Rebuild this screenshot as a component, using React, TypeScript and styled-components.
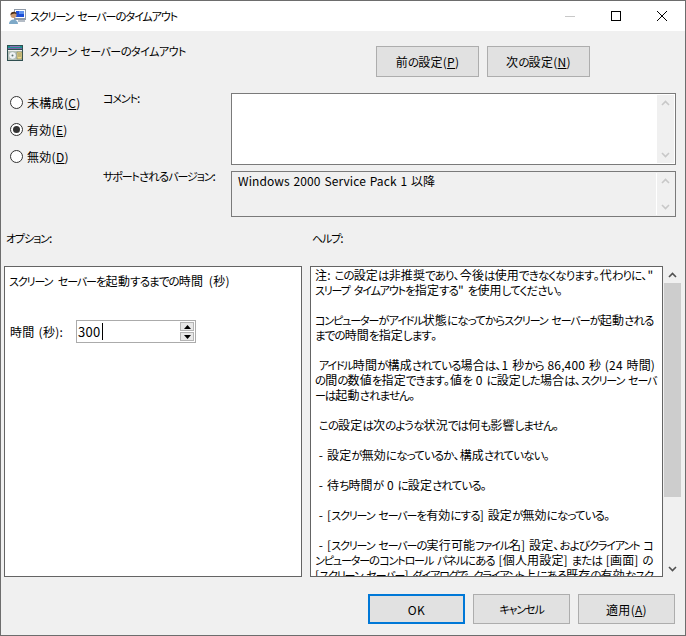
import React from 'react';
import styled, {createGlobalStyle} from 'styled-components';

const Global = createGlobalStyle`
	html, body {
		margin: 0;
		padding: 0;
		background: #f0f0f0;
	}
	body {
		font-family: "Noto Sans CJK JP", "Noto Sans", sans-serif;
		font-size: 12px;
		font-feature-settings: "palt";
		letter-spacing: 0.3px;
		word-spacing: 1px;
		color: #000;
	}
`;

const Kana = styled.span<{$katakana: boolean}>`
	font-size: ${(p) => (p.$katakana ? 11 : 11.5)}px;
	letter-spacing: ${(p) => (p.$katakana ? 'var(--katakana-track, -1.1px)' : '-0.9px')};
`;

// Meiryo UI has much narrower kana than the installed fonts, so kana runs get tightened
const Jp = ({children}: {children: string}) => {
	const runs = children.match(/[\u30a0-\u30ff]+|[\u3040-\u309f]+|[^\u3040-\u30ff]+/g) ?? [];
	return (
		<>
			{runs.map((run, i) =>
				/^[\u3040-\u30ff]/.test(run) ? (
					<Kana key={i} $katakana={/^[\u30a0-\u30ff]/.test(run)}>
						{run}
					</Kana>
				) : (
					<React.Fragment key={i}>{run}</React.Fragment>
				)
			)}
		</>
	);
};

const Window = styled.div`
	width: 686px;
	height: 636px;
	box-sizing: border-box;
	border: 1px solid #6d6d6d;
	background: #f0f0f0;
	display: flex;
	flex-direction: column;
	overflow: hidden;
`;

const TitleBar = styled.div`
	height: 30px;
	flex: none;
	background: #fff;
	display: flex;
	align-items: center;
	padding-left: 8px;
`;

const TitleText = styled.span`
	margin-left: 4px;
	flex: 1;
	line-height: 30px;
	white-space: pre;
`;

const CaptionButton = styled.div`
	width: 46px;
	height: 30px;
	display: flex;
	align-items: center;
	justify-content: center;
`;

const Header = styled.div`
	height: 62px;
	flex: none;
	display: flex;
	justify-content: space-between;
	padding: 14px 95px 0 6px;
	box-sizing: border-box;
`;

const PolicyName = styled.div`
	--katakana-track: -0.5px;
	display: flex;
	align-items: flex-start;
	gap: 7px;
	white-space: pre;
`;

const PolicyLabel = styled.span`
	line-height: 11px;
`;

const NavButtons = styled.div`
	display: flex;
	gap: 8px;
	margin-top: 1px;
`;

const Button = styled.div<{$width: number; $height: number; $primary?: boolean}>`
	width: ${(p) => p.$width}px;
	height: ${(p) => p.$height}px;
	box-sizing: border-box;
	background: #e1e1e1;
	border: ${(p) => (p.$primary ? '2px solid #0078d7' : '1px solid #adadad')};
	display: flex;
	align-items: center;
	justify-content: center;
	white-space: pre;
`;

const Settings = styled.div`
	height: 124px;
	flex: none;
	display: grid;
	grid-template-columns: 102px 128px 445px;
	grid-template-rows: 72px 46px;
	row-gap: 6px;
`;

const RadioGroup = styled.div`
	grid-row: 1 / span 2;
	display: flex;
	flex-direction: column;
	padding: 1px 0 0 9px;
	gap: 11px;
`;

const RadioRow = styled.div`
	display: flex;
	align-items: center;
	gap: 4px;
	height: 16px;
	white-space: pre;
`;

const RadioDot = styled.span<{$checked?: boolean}>`
	width: 13px;
	height: 13px;
	box-sizing: border-box;
	border-radius: 50%;
	border: 1px solid #333;
	background: #fff;
	display: flex;
	align-items: center;
	justify-content: center;
	&::after {
		content: '';
		display: ${(p) => (p.$checked ? 'block' : 'none')};
		width: 7px;
		height: 7px;
		border-radius: 50%;
		background: #333;
	}
`;

const FieldLabel = styled.div`
	line-height: 10px;
	white-space: pre;
`;

const Field = styled.div<{$readOnly?: boolean}>`
	box-sizing: border-box;
	border: 1px solid #7a7a7a;
	background: ${(p) => (p.$readOnly ? '#f0f0f0' : '#fff')};
	display: flex;
	justify-content: space-between;
	padding: ${(p) => (p.$readOnly ? '1px 1px 1px 6px' : '1px')};
	line-height: 16px;
	white-space: pre;
`;

const FieldValue = styled.span`
	letter-spacing: 0.1px;
`;

const FieldBar = styled.div<{$readOnly?: boolean}>`
	width: 17px;
	flex: none;
	background: #f0f0f0;
	border-left: ${(p) => (p.$readOnly ? '1px solid #fff' : 'none')};
	display: flex;
	flex-direction: column;
	justify-content: space-between;
	align-items: center;
	padding: 5px 0;
`;

const Captions = styled.div`
	height: 49px;
	flex: none;
	display: grid;
	grid-template-columns: 306px 1fr;
	padding: 13px 0 0 5px;
	box-sizing: border-box;
	line-height: 16px;
	white-space: pre;
`;

const Panes = styled.div`
	height: 311px;
	flex: none;
	display: flex;
	padding-left: 3px;
`;

const OptionsPane = styled.div`
	width: 298px;
	box-sizing: border-box;
	border: 1px solid #646464;
	background: #fff;
	margin-right: 8px;
	padding: 4px;
`;

const OptionTitle = styled.div`
	line-height: 20px;
	white-space: pre;
	word-spacing: 2.5px;
`;

const SpinRow = styled.div`
	display: flex;
	align-items: center;
	margin: 29px 0 0 1px;
	white-space: pre;
`;

const SpinLabel = styled.span`
	width: 66px;
`;

const SpinBox = styled.div`
	width: 120px;
	height: 23px;
	box-sizing: border-box;
	border: 1px solid #ababab;
	display: flex;
	align-items: center;
	justify-content: space-between;
	padding: 0 1px;
`;

const SpinValue = styled.span`
	display: inline-block;
	line-height: 17px;
	border-right: 1px solid #000;
	padding-right: 1px;
	font-size: 13px;
`;

const SpinButtons = styled.div`
	display: flex;
	flex-direction: column;
	gap: 1px;
`;

const SpinButton = styled.div`
	width: 14px;
	height: 9px;
	box-sizing: border-box;
	background: #e8e8e8;
	border: 1px solid #b4b4b4;
	display: flex;
	align-items: center;
	justify-content: center;
`;

const HelpPane = styled.div`
	width: 353px;
	box-sizing: border-box;
	border: 1px solid #646464;
	background: #fff;
	padding: 0 0 0 4px;
	overflow: hidden;
`;

const HelpLine = styled.div`
	height: 15px;
	line-height: 15px;
	white-space: pre;
	letter-spacing: 0.15px;
`;

const Scrollbar = styled.div`
	width: 17px;
	margin-left: 1px;
	display: flex;
	flex-direction: column;
	align-items: center;
`;

const ScrollArrow = styled.div`
	height: 17px;
	flex: none;
	display: flex;
	align-items: center;
	justify-content: center;
`;

const ScrollThumb = styled.div`
	width: 100%;
	height: 214px;
	margin-bottom: auto;
	background: #cdcdcd;
`;

const Footer = styled.div`
	flex: 1;
	display: flex;
	justify-content: flex-end;
	gap: 8px;
	padding: 17px 10px 0 0;
`;

const Chevron = ({up, color}: {up?: boolean; color: string}) => (
	<svg width="9" height="6" viewBox="0 0 9 6">
		<path d={up ? 'M1 5 L4.5 1.5 L8 5' : 'M1 1 L4.5 4.5 L8 1'} fill="none" stroke={color} strokeWidth="1.6" />
	</svg>
);

const SpinArrow = ({up}: {up?: boolean}) => (
	<svg width="7" height="4" viewBox="0 0 7 4">
		<path d={up ? 'M0 4 L3.5 0 L7 4 Z' : 'M0 0 L7 0 L3.5 4 Z'} fill="#000" />
	</svg>
);

const MonitorIcon = () => (
	<svg width="17" height="17" viewBox="0 0 17 17">
		<rect x="5" y="1" width="12" height="11" fill="#8f9aa8" />
		<rect x="6" y="2" width="10" height="8" fill="#fff" />
		<rect x="7" y="3" width="8" height="6" fill="#1d4fd8" />
		<rect x="10" y="3" width="5" height="3" fill="#5f93ee" />
		<rect x="9" y="12" width="7" height="2" fill="#b4bcc6" />
		<path d="M0 16 C0 10 9 10 9 16 Z" fill="#7ea9c8" />
		<circle cx="4.5" cy="7" r="3" fill="#c99a70" />
		<path d="M1.5 7 C1.5 2.8 7.5 2.8 7.5 6 C5.5 5 3.5 5.5 1.5 7 Z" fill="#4a2c14" />
	</svg>
);

const PolicyIcon = () => (
	<svg width="16" height="16" viewBox="0 0 16 16">
		<rect x="0" y="0" width="16" height="16" fill="#2f4f50" />
		<rect x="1" y="1" width="14" height="2" fill="#1f8f8f" />
		<rect x="3" y="1" width="10" height="1" fill="#8a6fb8" />
		<rect x="1" y="3" width="14" height="1" fill="#7a62a8" />
		<rect x="1" y="5" width="14" height="1" fill="#f0f0f0" />
		<rect x="1" y="6" width="14" height="9" fill="#b8c4b8" />
		<circle cx="5.5" cy="10.5" r="3.8" fill="#eef2f4" stroke="#8c9c9c" strokeWidth="0.5" />
		<circle cx="5.5" cy="10.5" r="1" fill="#5a7070" />
		<rect x="10" y="7" width="5" height="7" fill="#ecd98c" stroke="#6a6a4a" strokeWidth="0.5" />
		<path d="M11 9 H14 M11 11 H14" stroke="#6a6a4a" strokeWidth="0.7" />
	</svg>
);

const helpLines = [
	'注: この設定は非推奨であり、今後は使用できなくなります。代わりに、"',
	'スリープ タイムアウトを指定する" を使用してください。',
	'',
	'コンピューターがアイドル状態になってからスクリーン セーバーが起動される',
	'までの時間を指定します。',
	'',
	' アイドル時間が構成されている場合は、1 秒から 86,400 秒 (24 時間)',
	'の間の数値を指定できます。値を 0 に設定した場合は、スクリーン セーバ',
	'ーは起動されません。',
	'',
	' この設定は次のような状況では何も影響しません。',
	'',
	' - 設定が無効になっているか、構成されていない。',
	'',
	' - 待ち時間が 0 に設定されている。',
	'',
	' - [スクリーン セーバーを有効にする] 設定が無効になっている。',
	'',
	' - [スクリーン セーバーの実行可能ファイル名] 設定、およびクライアント コ',
	'ンピューターのコントロール パネルにある [個人用設定] または [画面] の',
	'[スクリーン セーバー] ダイアログで、クライアント上にある既存の有効なスク'
];

const App = () => {
	return (
		<Window>
			<Global />
			<TitleBar>
				<MonitorIcon />
				<TitleText>
					<Jp>スクリーン セーバーのタイムアウト</Jp>
				</TitleText>
				<CaptionButton>
					<svg width="10" height="10" viewBox="0 0 10 10">
						<path d="M0 5.5 H10" stroke="#c8c8c8" />
					</svg>
				</CaptionButton>
				<CaptionButton>
					<svg width="10" height="10" viewBox="0 0 10 10">
						<rect x="0.5" y="0.5" width="9" height="9" fill="none" stroke="#000" />
					</svg>
				</CaptionButton>
				<CaptionButton>
					<svg width="10" height="10" viewBox="0 0 10 10">
						<path d="M0 0 L10 10 M10 0 L0 10" stroke="#000" />
					</svg>
				</CaptionButton>
			</TitleBar>
			<Header>
				<PolicyName>
					<PolicyIcon />
					<PolicyLabel>
						<Jp>スクリーン セーバーのタイムアウト</Jp>
					</PolicyLabel>
				</PolicyName>
				<NavButtons>
					<Button $width={103} $height={31}>
						<span>
							<Jp>前の設定(</Jp>
							<u>P</u>)
						</span>
					</Button>
					<Button $width={103} $height={31}>
						<span>
							<Jp>次の設定(</Jp>
							<u>N</u>)
						</span>
					</Button>
				</NavButtons>
			</Header>
			<Settings>
				<RadioGroup>
					<RadioRow>
						<RadioDot />
						<span>
							未構成(<u>C</u>)
						</span>
					</RadioRow>
					<RadioRow>
						<RadioDot $checked />
						<span>
							有効(<u>E</u>)
						</span>
					</RadioRow>
					<RadioRow>
						<RadioDot />
						<span>
							無効(<u>D</u>)
						</span>
					</RadioRow>
				</RadioGroup>
				<FieldLabel>
					<Jp>コメント:</Jp>
				</FieldLabel>
				<Field>
					<span />
					<FieldBar>
						<Chevron up color="#c8c8c8" />
						<Chevron color="#c8c8c8" />
					</FieldBar>
				</Field>
				<FieldLabel>
					<Jp>サポートされるバージョン:</Jp>
				</FieldLabel>
				<Field $readOnly>
					<FieldValue>Windows 2000 Service Pack 1 以降</FieldValue>
					<FieldBar $readOnly>
						<Chevron up color="#c8c8c8" />
						<Chevron color="#c8c8c8" />
					</FieldBar>
				</Field>
			</Settings>
			<Captions>
				<span>
					<Jp>オプション:</Jp>
				</span>
				<span>
					<Jp>ヘルプ:</Jp>
				</span>
			</Captions>
			<Panes>
				<OptionsPane>
					<OptionTitle>
						<Jp>スクリーン セーバーを起動するまでの時間 (秒)</Jp>
					</OptionTitle>
					<SpinRow>
						<SpinLabel>時間 (秒):</SpinLabel>
						<SpinBox>
							<SpinValue>300</SpinValue>
							<SpinButtons>
								<SpinButton>
									<SpinArrow up />
								</SpinButton>
								<SpinButton>
									<SpinArrow />
								</SpinButton>
							</SpinButtons>
						</SpinBox>
					</SpinRow>
				</OptionsPane>
				<HelpPane>
					{helpLines.map((line, i) => (
						<HelpLine key={i}>
							<Jp>{line}</Jp>
						</HelpLine>
					))}
				</HelpPane>
				<Scrollbar>
					<ScrollArrow>
						<Chevron up color="#505050" />
					</ScrollArrow>
					<ScrollThumb />
					<ScrollArrow>
						<Chevron color="#505050" />
					</ScrollArrow>
				</Scrollbar>
			</Panes>
			<Footer>
				<Button $width={97} $height={30} $primary>
					OK
				</Button>
				<Button $width={97} $height={30}>
					<Jp>キャンセル</Jp>
				</Button>
				<Button $width={97} $height={30}>
					<span>
						適用(<u>A</u>)
					</span>
				</Button>
			</Footer>
		</Window>
	);
};

export default App;
